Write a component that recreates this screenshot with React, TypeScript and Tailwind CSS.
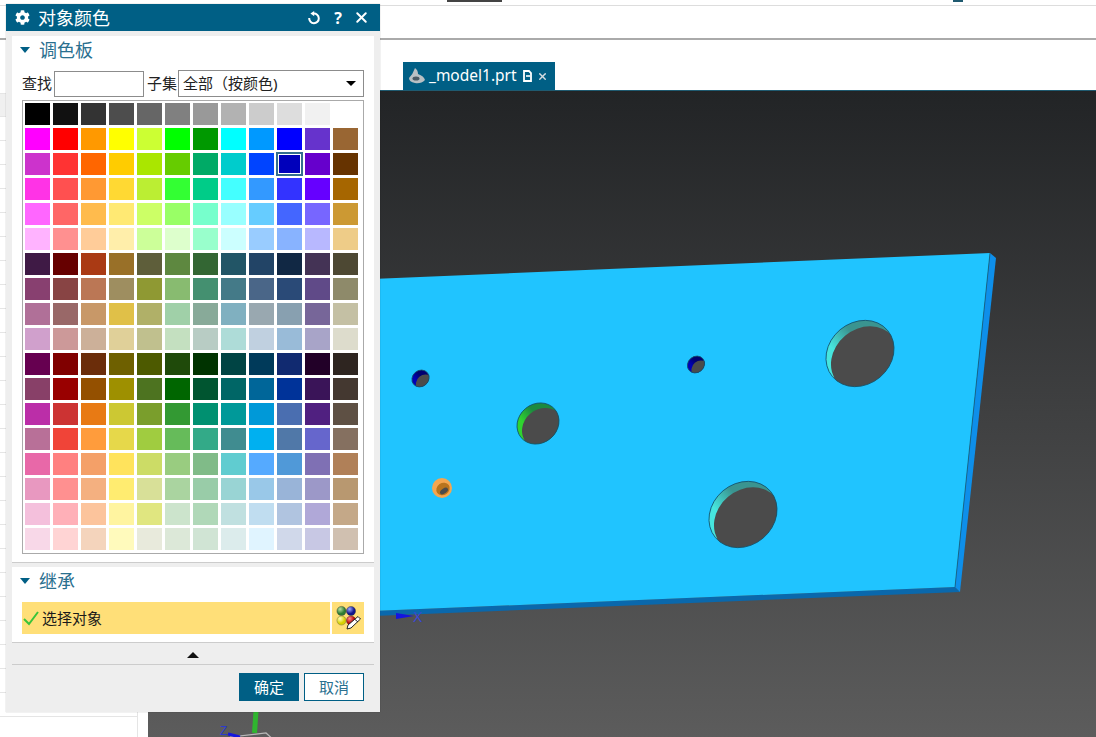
import { X } from "lucide-react";
import { FaCog } from "react-icons/fa";

const palette = [
  ["#000000", "#111111", "#333333", "#4d4d4d", "#666666", "#808080", "#999999", "#b2b2b2", "#cccccc", "#dddddd", "#f1f1f1", "#ffffff"],
  ["#ff00ff", "#ff0000", "#ff9900", "#ffff00", "#ccff33", "#00ff00", "#009900", "#00ffff", "#0099ff", "#0000ff", "#6633cc", "#996633"],
  ["#cc33cc", "#ff3333", "#ff6600", "#ffcc00", "#aae600", "#66cc00", "#00aa66", "#00cccc", "#0044ff", "#0000bb", "#6600cc", "#663300"],
  ["#ff33e6", "#ff5050", "#ff9933", "#ffd933", "#bbee33", "#33ff33", "#00cc88", "#44ffff", "#3399ff", "#3333ff", "#6600ff", "#a66600"],
  ["#ff66ff", "#ff6666", "#ffbb4d", "#ffe973", "#ccff66", "#99ff66", "#77ffcc", "#99ffff", "#66ccff", "#4466ff", "#7766ff", "#cc9933"],
  ["#ffb3ff", "#ff9090", "#ffcc99", "#ffeeaa", "#ccff99", "#ddffcc", "#99ffcc", "#ccffff", "#99ccff", "#88b3ff", "#b8b8ff", "#eecc88"],
  ["#3f1a45", "#660000", "#aa3a14", "#997028", "#5e5e3a", "#5e8840", "#336633", "#225566", "#224466", "#112844", "#443355", "#4d4833"],
  ["#884070", "#884444", "#bb7755", "#9e8e60", "#8f9933", "#88bb70", "#449070", "#447a88", "#4a6688", "#2a4a77", "#604a88", "#8e8a6a"],
  ["#b07098", "#996868", "#c89868", "#e0c048", "#b0b068", "#a0d0a8", "#88aa99", "#80b0c0", "#99a8b0", "#88a0b0", "#776699", "#c4c0a4"],
  ["#d0a0cc", "#cc9999", "#ccb099", "#e0d099", "#c0c08e", "#c4e0c0", "#b8ccc4", "#aedcd8", "#c0d0e0", "#99bbd8", "#a8a4c8", "#dddccc"],
  ["#660050", "#800000", "#6b2d0a", "#6e6000", "#4d5a00", "#1f4a0a", "#003300", "#004444", "#003a5a", "#112a70", "#220028", "#2e2520"],
  ["#884068", "#990000", "#945000", "#9e9000", "#4d7320", "#006600", "#005530", "#006666", "#006699", "#003399", "#3a1458", "#443830"],
  ["#bb2ea8", "#cc3333", "#e87a14", "#ccc833", "#7a9e2c", "#339933", "#009070", "#009999", "#0099d8", "#4a6eb0", "#502080", "#5e5044"],
  ["#b87098", "#f04438", "#ff9c3c", "#e6d84a", "#a0cc40", "#66bb5a", "#33aa88", "#408c90", "#00b0f0", "#5078a8", "#6666cc", "#857060"],
  ["#e868a8", "#ff8080", "#f4a068", "#ffe35c", "#ccdc66", "#99cc80", "#80bb88", "#60ccd0", "#55aaff", "#5099d8", "#7f70b4", "#b08058"],
  ["#e898c0", "#ff9090", "#f4b080", "#ffec70", "#d8e098", "#aad4a0", "#99cca8", "#99d4d4", "#99c8e8", "#99b4d8", "#9c98c8", "#b89870"],
  ["#f4c0dc", "#ffb0b8", "#fcc49c", "#fff4a0", "#e0e680", "#cce4cc", "#b0d8b8", "#c0e0e0", "#c0ddf0", "#b0c4e0", "#b0a8d8", "#c4a888"],
  ["#f8d8e8", "#ffd4d4", "#f4d4bc", "#fffabc", "#e8eadc", "#dce8d8", "#d0e4d4", "#dcecec", "#e0f4ff", "#d0d8ea", "#c8c8e4", "#d0c0b0"],
];

type HoleProps = {
  id: string;
  cx: number;
  cy: number;
  rx: number;
  ry: number;
  dx: number;
  dy: number;
  light: string;
  dark: string;
};

const Hole = ({ id, cx, cy, rx, ry, dx, dy, light, dark }: HoleProps) => (
  <g>
    <defs>
      <clipPath id={`clip-${id}`}>
        <ellipse cx={cx} cy={cy} rx={rx} ry={ry} transform={`rotate(-40 ${cx} ${cy})`} />
      </clipPath>
      {/* the ellipse is rotated, so this runs right to left to land top-right to bottom-left on the page */}
      <linearGradient id={`wall-${id}`} x1="1" y1="0.5" x2="0" y2="0.5">
        <stop offset="0.4" stopColor={dark} />
        <stop offset="0.75" stopColor={light} />
      </linearGradient>
    </defs>
    <ellipse cx={cx} cy={cy} rx={rx} ry={ry} transform={`rotate(-40 ${cx} ${cy})`} fill={`url(#wall-${id})`} />
    <g clipPath={`url(#clip-${id})`}>
      <ellipse cx={cx + dx} cy={cy + dy} rx={rx} ry={ry} transform={`rotate(-40 ${cx + dx} ${cy + dy})`} fill="#4b4b4b" />
    </g>
    <ellipse cx={cx} cy={cy} rx={rx} ry={ry} transform={`rotate(-40 ${cx} ${cy})`} fill="none" stroke="#14506a" strokeWidth="0.8" />
  </g>
);

const Viewport = () => (
  <svg viewBox="148 90 948 647" className="block w-full h-full">
    <defs>
      <linearGradient id="canvas-bg" x1="0" y1="0" x2="0" y2="1">
        <stop offset="0" stopColor="#222426" />
        <stop offset="1" stopColor="#5c5c5c" />
      </linearGradient>
    </defs>
    <rect x="148" y="90" width="948" height="647" fill="url(#canvas-bg)" />
    <rect x="148" y="90" width="948" height="1" fill="#1f5a70" />
    <polygon points="300,614 955,587 960,592 300,619" fill="#0a68ac" />
    <polygon points="990,253 996,258 960,592 955,587" fill="#0e8fea" />
    <polygon points="300,282 990,253 955,587 300,614" fill="#20c4ff" />
    <line x1="990" y1="253" x2="955" y2="587" stroke="#14506a" strokeWidth="0.7" />
    <Hole id="a" cx={420.5} cy={378.5} rx={9} ry={8} dx={4} dy={4.5} light="#0000b8" dark="#000070" />
    <Hole id="b" cx={696} cy={364.5} rx={9} ry={8} dx={4} dy={4.5} light="#0000b8" dark="#000070" />
    <Hole id="c" cx={538} cy={423.5} rx={22} ry={19.5} dx={5} dy={5} light="#2fd42f" dark="#1c8a40" />
    <Hole id="d" cx={860} cy={353.5} rx={36} ry={31} dx={5} dy={6} light="#46e6de" dark="#3a9490" />
    <Hole id="e" cx={743} cy={514.5} rx={36} ry={31} dx={5} dy={6} light="#46e6de" dark="#3a9490" />
    <circle cx="442" cy="488" r="10" fill="#f4a650" />
    <ellipse cx="443" cy="489" rx="7" ry="6" fill="#b8741e" transform="rotate(-35 443 489)" />
    <ellipse cx="444" cy="491" rx="4.5" ry="2.5" fill="#4b4b4b" transform="rotate(-35 444 491)" />
    <polygon points="396,613 414,616 396,619" fill="#1414e0" />
    <text x="413" y="622" fontSize="14" fill="#3a48d8" fontFamily="Liberation Sans, sans-serif">X</text>
    <line x1="256" y1="711" x2="254.5" y2="733" stroke="#2fb52f" strokeWidth="5" />
    <polyline points="230,737 266,733 276,742" fill="none" stroke="#b8b8b8" strokeWidth="1.2" />
    <line x1="228" y1="734" x2="240" y2="737" stroke="#1616e0" strokeWidth="3" />
    <text x="220" y="735" fontSize="12" fill="#2a3ad0" fontFamily="Liberation Sans, sans-serif">Z</text>
  </svg>
);

const ColorBallsIcon = () => (
  <svg viewBox="0 0 28 28" className="w-[28px] h-[28px]">
    <defs>
      <radialGradient id="ball-g" cx="0.35" cy="0.3"><stop offset="0" stopColor="#b8e0a0" /><stop offset="1" stopColor="#2e7d32" /></radialGradient>
      <radialGradient id="ball-b" cx="0.35" cy="0.3"><stop offset="0" stopColor="#9aa8ff" /><stop offset="1" stopColor="#10148c" /></radialGradient>
      <radialGradient id="ball-y" cx="0.35" cy="0.3"><stop offset="0" stopColor="#ffffc0" /><stop offset="1" stopColor="#d8d000" /></radialGradient>
      <radialGradient id="ball-r" cx="0.35" cy="0.3"><stop offset="0" stopColor="#ff9090" /><stop offset="1" stopColor="#b80000" /></radialGradient>
    </defs>
    <circle cx="7.5" cy="7" r="4.6" fill="url(#ball-g)" stroke="#333" strokeWidth="0.4" />
    <circle cx="17" cy="7" r="4.6" fill="url(#ball-b)" stroke="#333" strokeWidth="0.4" />
    <circle cx="7.5" cy="16.5" r="4.6" fill="url(#ball-y)" stroke="#555" strokeWidth="0.4" />
    <circle cx="17" cy="16.5" r="4.6" fill="url(#ball-r)" stroke="#333" strokeWidth="0.4" />
    <path d="M13 25 L14 21 L24 12.5 L26.5 15 L17 24 Z" fill="#fff" stroke="#222" strokeWidth="1" />
    <path d="M21 15.5 L24 18" stroke="#222" strokeWidth="1" />
  </svg>
);

const ResetIcon = () => (
  <svg viewBox="0 0 14 14" className="w-[14px] h-[14px] ml-auto">
    <path d="M6.5 2.6 A4.8 4.8 0 1 1 2.2 7" fill="none" stroke="white" strokeWidth="2" />
    <polygon points="7.2,0 7.2,5.2 3.4,2.6" fill="white" />
  </svg>
);

const PartIcon = () => (
  <svg viewBox="0 0 18 18" className="w-[18px] h-[18px] shrink-0">
    <path d="M7 1 Q10 3 10 7 Q16 9 17 13 Q13 17 7 16 Q1 15 1 11 Q5 7 7 1 Z" fill="#b9c0c4" />
    <ellipse cx="8" cy="11.5" rx="3.5" ry="2" fill="#4a5a64" />
  </svg>
);

const DocIcon = () => (
  <svg viewBox="0 0 9 12" className="w-[9px] h-[12px] shrink-0">
    <path d="M1 1 H6 L8 3 V11 H1 Z" fill="none" stroke="white" strokeWidth="1.8" />
    <path d="M3 6 H7" stroke="white" strokeWidth="1.6" />
  </svg>
);

const SectionHeader = ({ title }: { title: string }) => (
  <div className="flex items-center h-[28px] pl-[8px]">
    <div className="w-0 h-0 border-l-[5.5px] border-r-[5.5px] border-t-[6px] border-l-transparent border-r-transparent border-t-[#005f85]" />
    <span className="ml-[9px] text-[18px] leading-none text-[#2a708f]">{title}</span>
  </div>
);

const ColorDialog = () => (
  <div className="absolute left-[6px] top-[4px] w-[374px] h-[708px] bg-[#eeeeee] flex flex-col shadow-[0_0_1px_rgba(0,0,0,0.3)]">
    <div className="h-[27px] bg-[#005f85] flex items-center pl-[9px] pr-[10px] text-white shrink-0">
      <FaCog size={15} />
      <span className="ml-[8px] text-[18px] leading-none">对象颜色</span>
      <ResetIcon />
      <span className="ml-[11px] w-[12px] text-center text-[16px] font-bold leading-none">?</span>
      <X size={17} strokeWidth={2.8} className="ml-[9px]" />
    </div>
    <div className="mx-[6px] mt-[5px] h-[527px] bg-white border-b border-[#cccccc] shrink-0">
      <SectionHeader title="调色板" />
      <div className="flex items-center h-[27px] mt-[6px] pl-[10px] text-[15px] text-[#222222]">
        <span className="w-[32px]">查找</span>
        <div className="w-[90px] h-[26px] border border-[#8c8c8c] bg-white" />
        <span className="ml-[3px] w-[31px]">子集</span>
        <div className="w-[186px] h-[27px] border border-[#8c8c8c] flex items-center pl-[4px] pr-[7px]">
          <span>全部（按颜色)</span>
          <div className="ml-auto w-0 h-0 border-l-[5px] border-r-[5px] border-t-[5px] border-l-transparent border-r-transparent border-t-black" />
        </div>
      </div>
      <div className="ml-[10px] mt-[3px] w-[342px] h-[454px] border border-[#aaaaaa] pl-[2px] pt-[2px] grid grid-cols-[repeat(12,25px)] auto-rows-[22px] gap-[3px]">
        {palette.flatMap((row, r) =>
          row.map((color, c) =>
            r === 2 && c === 9 ? (
              <div key={`${r}-${c}`} className="border border-[#336e8e] outline outline-1 outline-[#336e8e]">
                <div className="w-full h-full border border-white" style={{ backgroundColor: color }} />
              </div>
            ) : (
              <div key={`${r}-${c}`} style={{ backgroundColor: color }} />
            )
          )
        )}
      </div>
    </div>
    <div className="mx-[6px] mt-[4px] h-[76px] bg-white border-b border-[#cccccc] shrink-0">
      <SectionHeader title="继承" />
      <div className="flex gap-[2px] ml-[10px] mt-[7px] h-[32px] w-[342px]">
        <div className="w-[308px] bg-[#ffdf78] flex items-center pl-[1px]">
          <svg viewBox="0 0 16 16" className="w-[16px] h-[16px]">
            <path d="M1 9 L6 14 L15 2" fill="none" stroke="#3ac43a" strokeWidth="2" />
          </svg>
          <span className="ml-[3px] text-[15px] text-[#1a1a1a]">选择对象</span>
        </div>
        <div className="flex-1 bg-[#ffdf78] flex items-center justify-center">
          <ColorBallsIcon />
        </div>
      </div>
    </div>
    <div className="mx-[6px] h-[22px] border-b border-[#cccccc] flex items-center justify-center pt-[2px] shrink-0">
      <div className="w-0 h-0 border-l-[6px] border-r-[6px] border-b-[6px] border-l-transparent border-r-transparent border-b-[#111111]" />
    </div>
    <div className="flex justify-end gap-[5px] pr-[16px] mt-[8px] text-[15px]">
      <div className="w-[60px] h-[28px] bg-[#005f85] text-white flex items-center justify-center">确定</div>
      <div className="w-[60px] h-[28px] bg-white border border-[#005f85] text-[#2a708f] flex items-center justify-center">取消</div>
    </div>
  </div>
);

export default function App() {
  return (
    <div className="relative w-[1096px] h-[737px] overflow-hidden bg-white flex flex-col font-['Noto_Sans','Noto_Sans_CJK_SC',sans-serif]">
      <div className="h-[6px] border-b border-[#dddddd] shrink-0 flex items-start">
        <div className="ml-[447px] w-[55px] h-[2px] bg-[#444444]" />
        <div className="ml-[451px] w-[10px] h-[2px] bg-[#1f5a70]" />
      </div>
      <div className="h-[32px] shrink-0" />
      <div className="h-[2px] bg-[#aaaaaa] shrink-0" />
      <div className="h-[50px] shrink-0 flex items-end pl-[403px]">
        <div className="h-[28px] w-[152px] bg-[#005f85] text-white flex items-center pl-[5px]">
          <PartIcon />
          <span className="ml-[3px] text-[15.5px] leading-none">_model1.prt</span>
          <div className="ml-[6px] flex items-center"><DocIcon /></div>
          <X size={11} strokeWidth={3} className="ml-[5px] text-[#d5dde2]" />
        </div>
      </div>
      <div className="flex flex-1 min-h-0">
        <div className="w-[148px] shrink-0 pt-[3px]">
          <div className="w-[138px] border-r border-[#e5e5e5] h-full">
            <div className="h-[24px] bg-[#f0f0f0] border-y border-[#e5e5e5]" />
            {Array.from({ length: 25 }).map((_, i) => (
              <div key={i} className="h-[24px] border-b border-[#e5e5e5]" />
            ))}
          </div>
        </div>
        <div className="flex-1 min-w-0">
          <Viewport />
        </div>
      </div>
      <ColorDialog />
    </div>
  );
}
